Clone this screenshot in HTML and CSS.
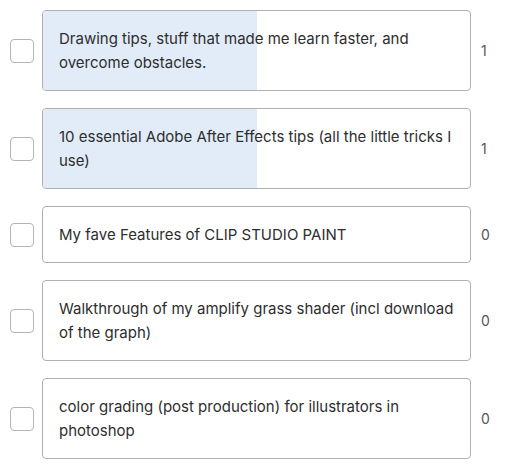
FILE: index.html
```html
<!DOCTYPE html>
<html>
<head>
<meta charset="utf-8">
<link rel="stylesheet" href="styles.css">
</head>
<body>
<div class="list">
  <div class="row">
    <span class="check"></span>
    <div class="card">
      <div class="fill" style="width:50%"></div>
      <div class="label">Drawing tips, stuff that made me learn faster, and overcome obstacles.</div>
    </div>
    <span class="count">1</span>
  </div>
  <div class="row">
    <span class="check"></span>
    <div class="card">
      <div class="fill" style="width:50%"></div>
      <div class="label">10 essential Adobe After Effects tips (all the little tricks I use)</div>
    </div>
    <span class="count">1</span>
  </div>
  <div class="row">
    <span class="check"></span>
    <div class="card">
      <div class="label">My fave Features of CLIP STUDIO PAINT</div>
    </div>
    <span class="count">0</span>
  </div>
  <div class="row">
    <span class="check"></span>
    <div class="card">
      <div class="label">Walkthrough of my amplify grass shader (incl download of the graph)</div>
    </div>
    <span class="count">0</span>
  </div>
  <div class="row">
    <span class="check"></span>
    <div class="card">
      <div class="label">color grading (post production) for illustrators in photoshop</div>
    </div>
    <span class="count">0</span>
  </div>
</div>
</body>
</html>
```
FILE: styles.css
```css
html, body {
  margin: 0;
  padding: 0;
  background: #ffffff;
}
body {
  font-family: Inter, "Noto Sans", sans-serif;
  color: #2e2e2e;
}
.list {
  display: flex;
  flex-direction: column;
  gap: 17px;
  padding: 10px 0 0 10px;
}
.row {
  display: flex;
  align-items: center;
}
.check {
  width: 22px;
  height: 22px;
  border: 1px solid #b5b5b5;
  border-radius: 4px;
  background: #fff;
  flex: none;
}
.card {
  position: relative;
  width: 427px;
  margin-left: 8px;
  border: 1px solid #b0b0b0;
  border-radius: 4px;
  overflow: hidden;
  flex: none;
}
.fill {
  position: absolute;
  left: 0;
  top: 0;
  bottom: 0;
  background: #e1ecf8;
}
.label {
  position: relative;
  padding: 16px 16px 15px;
  font-size: 15px;
  line-height: 24px;
}
.count {
  margin-left: 10px;
  font-size: 14px;
  color: #555;
}
```
